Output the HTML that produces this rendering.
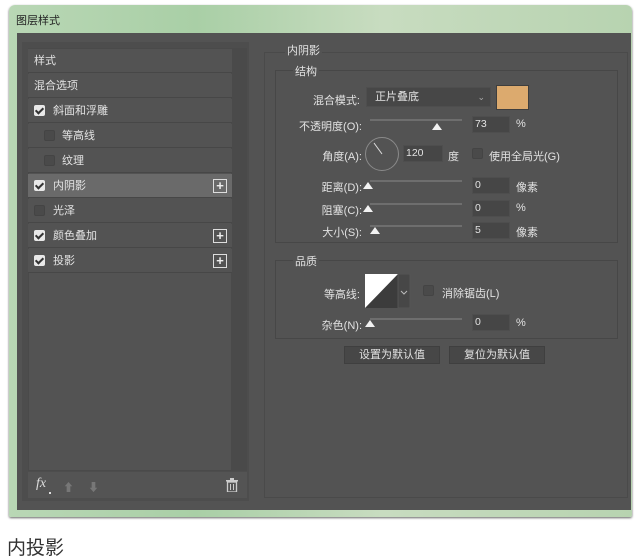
<!DOCTYPE html>
<html><head><meta charset="utf-8"><style>
*{margin:0;padding:0;box-sizing:border-box}
body{width:640px;height:560px;background:#fff;position:relative;overflow:hidden;font-family:"Liberation Sans","Noto Sans CJK SC",sans-serif;color:#e2e2e2;font-size:11px}
.a{position:absolute}
.win{left:9px;top:5px;width:623px;height:512px;border-radius:6px 6px 2px 2px;background:linear-gradient(90deg,#b9d7b5,#a9cfa6 30%,#c8dcc0 60%,#b7d3b0);box-shadow:0 1px 2px #666}
.dark{left:17px;top:33px;width:614px;height:477px;background:#535353}
.row{position:absolute;left:28px;width:204px;height:24px;background:#535353;border-bottom:1px solid #474747;line-height:24px}
.cb{position:absolute;width:11px;height:11px;top:6px;border-radius:2px}
.on{background:#e8e8e8}
.on:after{content:"";position:absolute;left:3px;top:1px;width:3px;height:6px;border:solid #333;border-width:0 2px 2px 0;transform:rotate(45deg)}
.off{background:#4a4a4a;border:1px solid #444}
.plus{position:absolute;left:185px;top:5px;width:14px;height:14px;border:1px solid #ddd;color:#eee;font-size:13px;line-height:11px;text-align:center;font-weight:bold}
.lbl{position:absolute;text-align:right;font-size:11px}
.inp{position:absolute;width:38px;height:17px;background:#464646;border:1px solid #4e4e4e;line-height:15px;padding-left:2px;font-size:10.5px}
.trk{position:absolute;height:2px;background:#6e6e6e;width:92px;left:370px}
.th{position:absolute;width:0;height:0;border-left:5px solid transparent;border-right:5px solid transparent;border-bottom:7px solid #f2f2f2}
.grp{position:absolute;border:1px solid #474747;border-top-color:#474747}
.btn{position:absolute;height:18px;background:#474747;border:1px solid #3f3f3f;text-align:center;line-height:16px;font-size:11px}
</style></head><body>
<div class="a win"></div>
<div class="a" style="left:16px;top:12px;font-size:11px;color:#222">图层样式</div>
<div class="a dark"></div>
<!-- left panel -->
<div class="a" style="left:22px;top:42px;width:227px;height:459px;background:#4d4d4d"></div>
<div class="a" style="left:28px;top:48px;width:204px;height:423px;background:#535353;border:1px solid #4a4a4a"></div>
<div class="a" style="left:232px;top:48px;width:15px;height:423px;background:#4a4a4a"></div>
<div class="row" style="top:49px;padding-left:6px">样式</div>
<div class="row" style="top:74px;padding-left:6px">混合选项</div>
<div class="row" style="top:99px"><div class="cb on" style="left:6px"></div><span style="position:absolute;left:25px">斜面和浮雕</span></div>
<div class="row" style="top:124px"><div class="cb off" style="left:16px"></div><span style="position:absolute;left:34px">等高线</span></div>
<div class="row" style="top:149px"><div class="cb off" style="left:16px"></div><span style="position:absolute;left:34px">纹理</span></div>
<div class="row" style="top:174px;background:#6a6a6a"><div class="cb on" style="left:6px"></div><span style="position:absolute;left:25px">内阴影</span><div class="plus">+</div></div>
<div class="row" style="top:199px"><div class="cb off" style="left:6px"></div><span style="position:absolute;left:25px">光泽</span></div>
<div class="row" style="top:224px"><div class="cb on" style="left:6px"></div><span style="position:absolute;left:25px">颜色叠加</span><div class="plus">+</div></div>
<div class="row" style="top:249px"><div class="cb on" style="left:6px"></div><span style="position:absolute;left:25px">投影</span><div class="plus">+</div></div>
<div class="a" style="left:28px;top:472px;width:219px;height:26px;background:#545454"></div>
<div class="a" style="left:36px;top:476px;font-style:italic;font-family:'Liberation Serif',serif;font-size:14px;color:#ddd">fx</div>
<div class="a" style="left:49px;top:492px;width:2px;height:2px;background:#ddd"></div>
<div class="a" style="left:63px;top:479px;color:#777;font-size:11px">⬆</div>
<div class="a" style="left:88px;top:479px;color:#777;font-size:11px">⬇</div>
<svg class="a" style="left:226px;top:478px" width="12" height="14" viewBox="0 0 12 14"><rect x="0" y="2" width="12" height="1.5" fill="#ccc"/><rect x="4" y="0" width="4" height="2" fill="#ccc"/><rect x="1.5" y="4" width="9" height="10" fill="none" stroke="#ccc" stroke-width="1.3"/><path d="M4.5 6v6M7.5 6v6" stroke="#ccc"/></svg>
<!-- right panel -->
<div class="a" style="left:264px;top:52px;width:364px;height:446px;border:1px solid #4a4a4a"></div>
<div class="a" style="left:285px;top:42px;background:#535353;padding:0 2px">内阴影</div>
<div class="grp" style="left:275px;top:70px;width:343px;height:173px"></div>
<div class="a" style="left:293px;top:63px;background:#535353;padding:0 2px">结构</div>
<div class="lbl" style="left:290px;width:70px;top:92px">混合模式:</div>
<div class="a" style="left:366px;top:87px;width:125px;height:20px;background:#474747;border:1px solid #4e4e4e;padding-left:8px;line-height:18px">正片叠底<span style="position:absolute;right:5px;color:#aaa;font-size:9px">⌄</span></div>
<div class="a" style="left:496px;top:85px;width:33px;height:25px;background:#dcaa6e;border:1px solid #3e3e3e"></div>
<div class="lbl" style="left:280px;width:82px;top:118px">不透明度(O):</div>
<div class="trk" style="top:119px"></div><div class="th" style="left:432px;top:123px"></div>
<div class="inp" style="left:472px;top:116px">73</div><div class="a" style="left:516px;top:118px">%</div>
<div class="lbl" style="left:300px;width:62px;top:148px">角度(A):</div>
<div class="a" style="left:365px;top:137px;width:34px;height:34px;border:1px solid #8a8a8a;border-radius:50%"></div>
<svg class="a" style="left:365px;top:137px" width="34" height="34"><line x1="17" y1="17" x2="9" y2="6" stroke="#ddd" stroke-width="1"/></svg>
<div class="inp" style="left:403px;top:145px;width:40px">120</div><div class="a" style="left:448px;top:148px">度</div>
<div class="cb off a" style="left:472px;top:148px;width:11px;height:11px"></div>
<div class="a" style="left:489px;top:148px">使用全局光(G)</div>
<div class="lbl" style="left:300px;width:62px;top:179px">距离(D):</div>
<div class="trk" style="top:180px"></div><div class="th" style="left:363px;top:182px"></div>
<div class="inp" style="left:472px;top:177px">0</div><div class="a" style="left:516px;top:179px">像素</div>
<div class="lbl" style="left:300px;width:62px;top:202px">阻塞(C):</div>
<div class="trk" style="top:203px"></div><div class="th" style="left:363px;top:205px"></div>
<div class="inp" style="left:472px;top:200px">0</div><div class="a" style="left:516px;top:202px">%</div>
<div class="lbl" style="left:300px;width:62px;top:224px">大小(S):</div>
<div class="trk" style="top:225px"></div><div class="th" style="left:370px;top:227px"></div>
<div class="inp" style="left:472px;top:222px">5</div><div class="a" style="left:516px;top:224px">像素</div>
<div class="grp" style="left:275px;top:260px;width:343px;height:79px"></div>
<div class="a" style="left:293px;top:253px;background:#535353;padding:0 2px">品质</div>
<div class="lbl" style="left:300px;width:60px;top:286px">等高线:</div>
<svg class="a" style="left:365px;top:274px" width="46" height="34"><rect x="0" y="0" width="33" height="34" fill="#fff"/><path d="M0 34L33 0V34Z" fill="#3c3c3c"/><rect x="33" y="0" width="12" height="34" fill="#474747" stroke="#555"/><path d="M36 17l3 3 3-3" stroke="#bbb" fill="none"/></svg>
<div class="cb off a" style="left:423px;top:285px;width:11px;height:11px"></div>
<div class="a" style="left:442px;top:285px">消除锯齿(L)</div>
<div class="lbl" style="left:300px;width:62px;top:317px">杂色(N):</div>
<div class="trk" style="top:318px"></div><div class="th" style="left:365px;top:320px"></div>
<div class="inp" style="left:472px;top:314px">0</div><div class="a" style="left:516px;top:317px">%</div>
<div class="btn" style="left:344px;top:346px;width:96px">设置为默认值</div>
<div class="btn" style="left:449px;top:346px;width:96px">复位为默认值</div>
<div class="a" style="left:7px;top:533px;font-size:19px;color:#333">内投影</div>
</body></html>
